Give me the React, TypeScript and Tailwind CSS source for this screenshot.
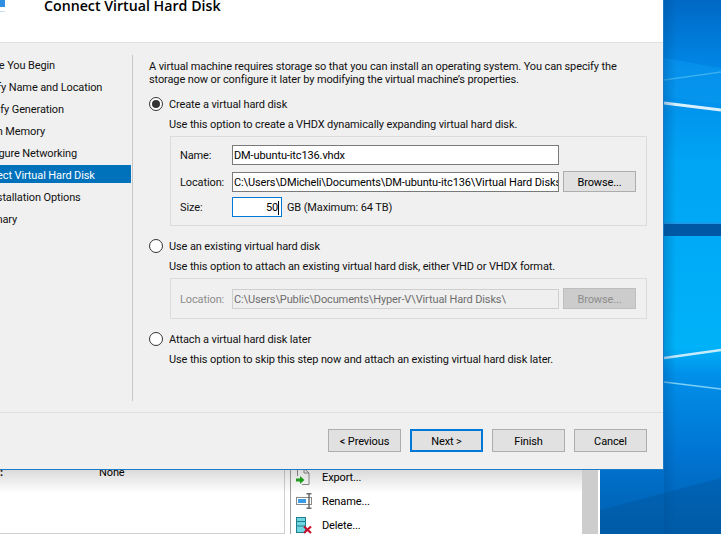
const FONT = "[font-family:'Roboto','Noto_Sans',sans-serif] text-[11px] leading-[16px] tracking-[-0.12px]";
// Roboto sits a pixel higher than the original UI font
const NUDGE = "pt-[2px]";

const NAV_ITEMS = [
  { label: "Before You Begin", left: "-ml-[27px]" },
  { label: "Specify Name and Location", left: "-ml-[29px]" },
  { label: "Specify Generation", left: "-ml-[26px]" },
  { label: "Assign Memory", left: "-ml-[30px]" },
  { label: "Configure Networking", left: "-ml-[27px]" },
  { label: "Connect Virtual Hard Disk", left: "-ml-[28px]" },
  { label: "Installation Options", left: "-ml-[12px]" },
  { label: "Summary", left: "-ml-[29px]" },
];

function Wallpaper() {
  return (
    <svg className="absolute inset-0" width="721" height="534" viewBox="0 0 721 534">
      <defs>
        <linearGradient id="sky" x1="0" y1="0" x2="0" y2="1">
          <stop offset="0" stopColor="#0068c4" />
          <stop offset="0.13" stopColor="#0088e8" />
          <stop offset="0.3" stopColor="#00a4f4" />
          <stop offset="0.65" stopColor="#00b2f8" />
          <stop offset="0.7" stopColor="#0090ea" />
          <stop offset="0.85" stopColor="#0074d2" />
          <stop offset="1" stopColor="#005fae" />
        </linearGradient>
        <linearGradient id="edge" x1="0" y1="0" x2="1" y2="0">
          <stop offset="0" stopColor="#004c90" stopOpacity="0.3" />
          <stop offset="1" stopColor="#004c90" stopOpacity="0" />
        </linearGradient>
      </defs>
      <rect width="721" height="534" fill="url(#sky)" />
      <rect x="664" y="224" width="57" height="12" fill="#0058a4" />
      <rect x="664" y="222" width="57" height="2" fill="#1a9ae8" />
      <polygon points="664,58 721,68 721,104 664,96" fill="#0a9af0" opacity="0.5" />
      <line x1="664" y1="80" x2="721" y2="72" stroke="#5cc4f4" strokeWidth="1.5" opacity="0.6" />
      <line x1="664" y1="103" x2="721" y2="110" stroke="#d8f0fc" strokeWidth="3" />
      <line x1="664" y1="358" x2="721" y2="350" stroke="#c4ecfc" strokeWidth="2.5" />
      <line x1="664" y1="382" x2="721" y2="389" stroke="#7ad0f6" strokeWidth="1.5" />
      <polygon points="600,510 721,478 721,534 600,534" fill="#00569c" opacity="0.4" />
      <rect x="664" y="0" width="12" height="534" fill="url(#edge)" />
    </svg>
  );
}

function ExportIcon() {
  return (
    <svg width="14" height="18" viewBox="0 0 14 18" fill="none">
      <path d="M1.5 1V8M3.5 0.5H8L13 5V16.5H6" stroke="#8a8a8a" />
      <path d="M8 1V5H13" stroke="#8a8a8a" />
      <path d="M0 10.5H4V8L8.5 12L4 16V13.5H0Z" fill="#22aa22" />
    </svg>
  );
}

function RenameIcon() {
  return (
    <svg width="18" height="16" viewBox="0 0 18 16" fill="none">
      <rect x="0.5" y="4.5" width="15" height="7" fill="#ffffff" stroke="#8a8a8a" />
      <rect x="2" y="6" width="8" height="4" fill="#3a9be8" />
      <path d="M13 1V15M10.5 0.75H15.5M10.5 15.25H15.5" stroke="#6e6e6e" strokeWidth="1.5" />
    </svg>
  );
}

function DeleteIcon() {
  return (
    <svg width="16" height="17" viewBox="0 0 16 17" fill="none">
      <rect x="0.5" y="0.5" width="9" height="15" fill="#6fd5e0" stroke="#1f7f8c" />
      <path d="M1 4.5H9M1 9H9" stroke="#1f7f8c" />
      <path d="M8 9.5L15 16M15 9.5L8 16" stroke="#c8102e" strokeWidth="2.2" />
    </svg>
  );
}

function BackgroundWindow() {
  const rows = [
    { label: "Export...", icon: <ExportIcon /> },
    { label: "Rename...", icon: <RenameIcon /> },
    { label: "Delete...", icon: <DeleteIcon /> },
  ];
  return (
    <div className={`absolute left-0 top-[460px] flex h-[74px] w-[600px] overflow-hidden border-r-2 border-white bg-white text-black ${FONT}`}>
      <div className="relative w-[285px] border-r border-[#d0d0d0]">
        <span className="absolute left-[99px] top-[5px]">None</span>
        <span className="absolute left-0 top-[5px] font-bold">:</span>
        <div className="absolute bottom-0 left-0 h-px w-full bg-[#d0d0d0]" />
      </div>
      <div className="ml-[5px] flex w-[292px] flex-col border-l border-[#a0a0a0] pl-[5px] pt-[5px]">
        {rows.map((row) => (
          <div key={row.label} className="flex h-[24px] shrink-0 items-center">
            <span className="flex w-[26px]">{row.icon}</span>
            <span className={NUDGE}>{row.label}</span>
          </div>
        ))}
      </div>
      <div className="absolute right-0 top-0 h-full w-[16px] bg-[#cdcdcd]" />
      <div className="absolute left-0 top-[9px] h-[24px] w-[582px] bg-gradient-to-b from-[#00000026] to-transparent" />
    </div>
  );
}

function Radio({ checked }: { checked?: boolean }) {
  return (
    <span className="flex h-[14px] w-[14px] items-center justify-center rounded-full border border-[#333333] bg-white">
      {checked && <span className="h-[8px] w-[8px] rounded-full bg-[#333333]" />}
    </span>
  );
}

function Button({ children, variant, small }: { children: string; variant?: "default" | "disabled"; small?: boolean }) {
  const look =
    variant === "default"
      ? "border-2 border-[#0078d7] bg-[#e1e1e1] text-black"
      : variant === "disabled"
        ? "border border-[#bfbfbf] bg-[#cccccc] text-[#8c8c8c]"
        : "border border-[#adadad] bg-[#e1e1e1] text-black";
  return (
    <div className={`flex w-[73px] items-center justify-center ${small ? "h-[21px]" : "h-[23px]"} ${NUDGE} ${look}`}>{children}</div>
  );
}

function Field({ value, disabled }: { value: string; disabled?: boolean }) {
  return (
    <div
      className={`flex h-[20px] w-[327px] items-center overflow-hidden whitespace-nowrap border px-[1px] ${NUDGE} ${
        disabled ? "border-[#cfcfcf] bg-[#efefef] text-[#6d6d6d]" : "border-[#7a7a7a] bg-white text-black"
      }`}
    >
      {value}
    </div>
  );
}

function Dialog() {
  return (
    <div className={`absolute left-0 top-0 flex h-[470px] w-[664px] flex-col border-b border-r border-[#1a7cc8] bg-[#f0f0f0] text-[#111111] ${FONT}`}>
      <header className="relative h-[43px] shrink-0 border-b border-[#dfdfdf] bg-white">
        <div className="absolute left-0 top-0 h-[7px] w-[5px] bg-[#2f8fe0]" />
        <div className="absolute left-0 top-[11px] h-px w-[5px] bg-[#c8dcec]" />
        <h1 className="absolute left-[44px] top-[-4px] [font-family:'Open_Sans',sans-serif] text-[14.2px] font-semibold leading-[20px] tracking-normal text-black">
          Connect Virtual Hard Disk
        </h1>
      </header>

      <main className="flex h-[370px] shrink-0 border-b border-[#dfdfdf]">
        <nav className="mt-[12px] h-[346px] w-[133px] shrink-0 overflow-hidden border-r border-[#c8c8c8] pr-px">
          {NAV_ITEMS.map((item, i) => (
            <div
              key={item.label}
              className={`mb-[4px] flex h-[18px] items-center whitespace-nowrap pt-[4px] ${i === 5 ? "bg-[#0072bc] text-white" : ""}`}
            >
              <span className={item.left}>{item.label}</span>
            </div>
          ))}
        </nav>

        <section className="ml-[16px] w-[498px] pt-[17px]">
          <p className="w-[490px] leading-[13px]">
            A virtual machine requires storage so that you can install an operating system. You can specify the
            storage now or configure it later by modifying the virtual machine’s properties.
          </p>

          <label className="mt-[10px] flex h-[16px] items-center gap-[6px]">
            <Radio checked />
            <span className={NUDGE}>Create a virtual hard disk</span>
          </label>
          <p className="ml-[20px] mt-[5px]">Use this option to create a VHDX dynamically expanding virtual hard disk.</p>
          <div className="ml-[21px] mt-[3px] flex h-[90px] w-[477px] flex-col border border-[#dcdcdc] pl-[9px] pt-[8px]">
            <div className="flex items-center">
              <span className={`w-[52px] ${NUDGE}`}>Name:</span>
              <Field value="DM-ubuntu-itc136.vhdx" />
            </div>
            <div className="mt-[6px] flex items-center">
              <span className={`w-[52px] ${NUDGE}`}>Location:</span>
              <Field value="C:\Users\DMicheli\Documents\DM-ubuntu-itc136\Virtual Hard Disks\" />
              <span className="ml-[4px]"><Button small>Browse...</Button></span>
            </div>
            <div className="mt-[5px] flex items-center">
              <span className={`w-[52px] ${NUDGE}`}>Size:</span>
              <div className={`flex h-[20px] w-[50px] items-center justify-end border border-[#0078d7] bg-white pr-[2px] text-black ${NUDGE}`}>
                50<span className="h-[14px] w-px bg-black" />
              </div>
              <span className={`ml-[5px] ${NUDGE}`}>GB (Maximum: 64 TB)</span>
            </div>
          </div>

          <label className="mt-[12px] flex h-[16px] items-center gap-[6px]">
            <Radio />
            <span className={NUDGE}>Use an existing virtual hard disk</span>
          </label>
          <p className="ml-[20px] mt-[5px]">Use this option to attach an existing virtual hard disk, either VHD or VHDX format.</p>
          <div className="ml-[21px] mt-[3px] flex h-[41px] w-[477px] items-center border border-[#dcdcdc] pl-[9px]">
            <span className={`w-[52px] text-[#8c8c8c] ${NUDGE}`}>Location:</span>
            <Field value="C:\Users\Public\Documents\Hyper-V\Virtual Hard Disks\" disabled />
            <span className="ml-[4px]"><Button variant="disabled" small>Browse...</Button></span>
          </div>

          <label className="mt-[12px] flex h-[16px] items-center gap-[6px]">
            <Radio />
            <span className={NUDGE}>Attach a virtual hard disk later</span>
          </label>
          <p className="ml-[20px] mt-[5px]">Use this option to skip this step now and attach an existing virtual hard disk later.</p>
        </section>
      </main>

      <footer className="flex flex-1 items-start justify-end gap-[9px] pr-[16px] pt-[16px]">
        <Button>&lt; Previous</Button>
        <Button variant="default">Next &gt;</Button>
        <Button>Finish</Button>
        <Button>Cancel</Button>
      </footer>
    </div>
  );
}

export default function App() {
  return (
    <div className="relative h-[534px] w-[721px] overflow-hidden">
      <Wallpaper />
      <BackgroundWindow />
      <Dialog />
    </div>
  );
}
